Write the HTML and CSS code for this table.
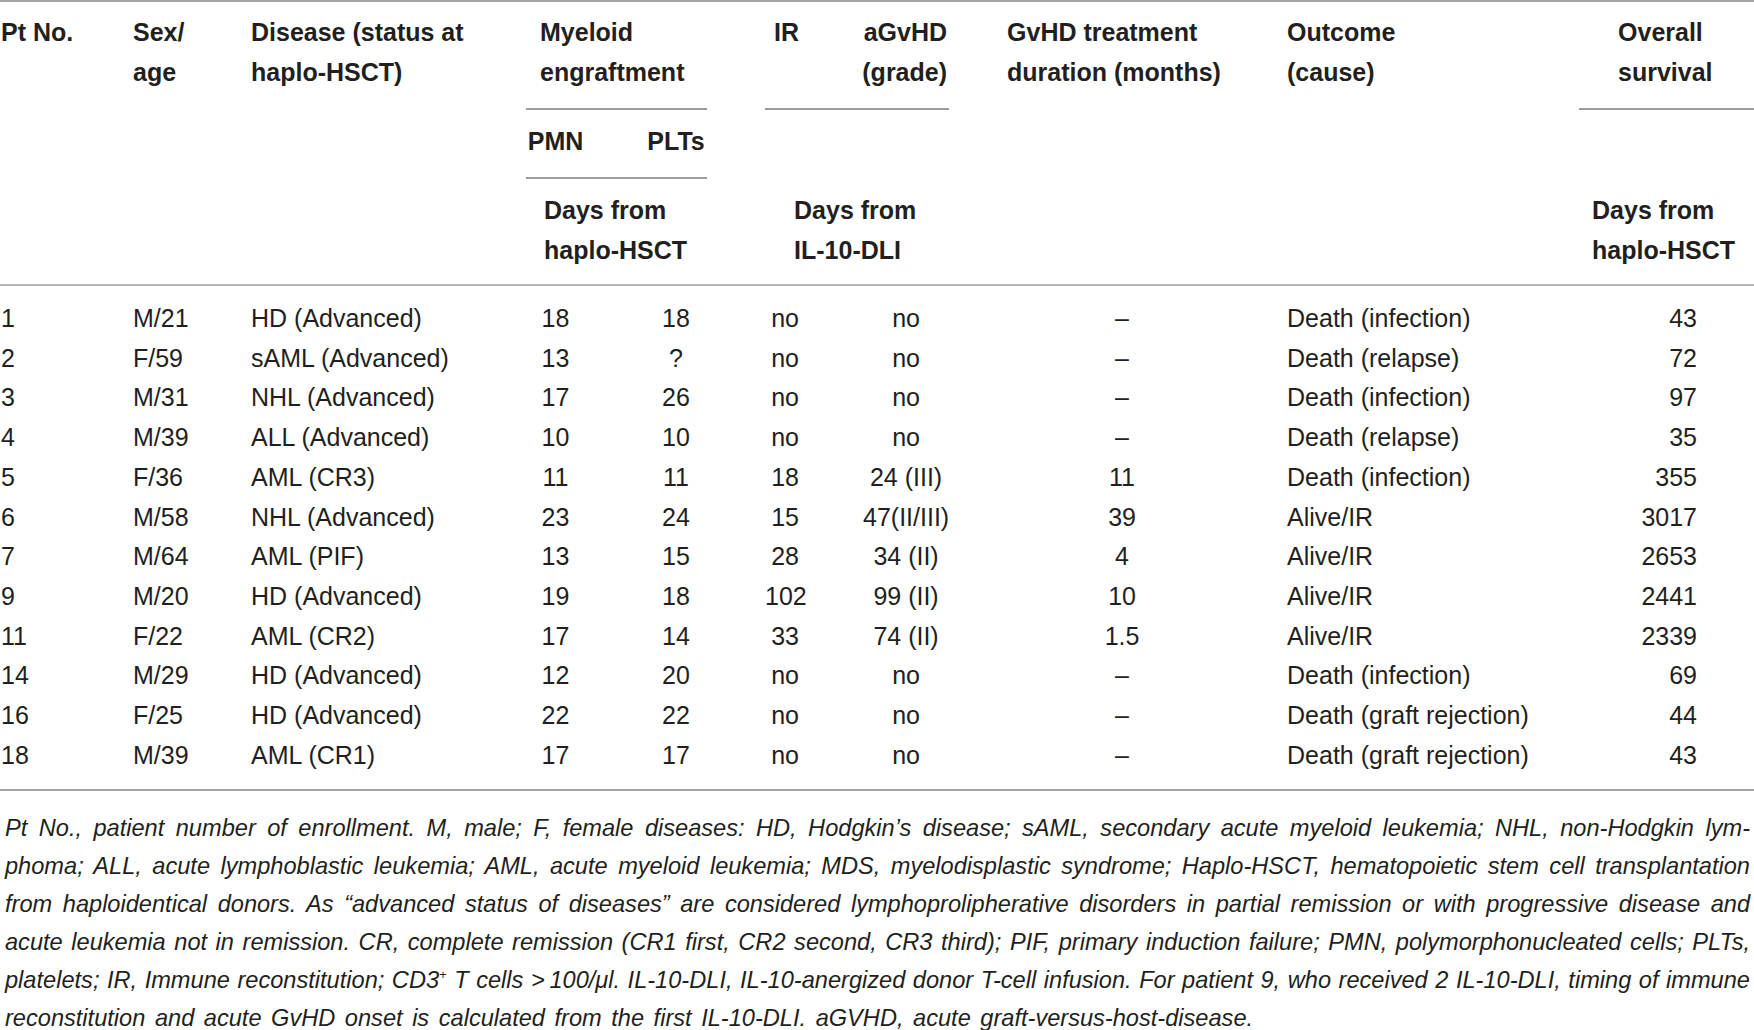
FILE: index.html
```html
<!DOCTYPE html>
<html lang="en">
<head>
<meta charset="utf-8">
<title>Table</title>
<link rel="stylesheet" href="styles.css">
</head>
<body>
<table class="data">
  <colgroup>
    <col class="w-pt"><col class="w-sex"><col class="w-dis"><col class="w-pmn"><col class="w-gap1"><col class="w-plt"><col class="w-gap2"><col class="w-ir"><col class="w-agv"><col class="w-trt"><col class="w-out"><col class="w-os">
  </colgroup>
  <thead>
    <tr>
      <th rowspan="3" class="h-span h-pt">Pt No.</th>
      <th rowspan="3" class="h-span h-sex">Sex/<br>age</th>
      <th rowspan="3" class="h-span h-dis">Disease (status at<br>haplo-HSCT)</th>
      <th colspan="3" class="h-group h-mye">Myeloid<br>engraftment</th>
      <th rowspan="3" class="h-span"></th>
      <th class="h-group h-ir">IR</th>
      <th class="h-group h-agv">aGvHD<br>(grade)</th>
      <th rowspan="3" class="h-span h-trt">GvHD treatment<br>duration (months)</th>
      <th rowspan="3" class="h-span h-out">Outcome<br>(cause)</th>
      <th class="h-group h-os">Overall<br>survival</th>
    </tr>
    <tr>
      <th class="h-sub h-pmn">PMN</th>
      <th class="h-sub"></th>
      <th class="h-sub h-plt">PLTs</th>
      <th class="h-blank"></th>
      <th class="h-blank"></th>
      <th class="h-blank"></th>
    </tr>
    <tr>
      <th colspan="3" class="h-days h-days-mye">Days from<br>haplo-HSCT</th>
      <th colspan="2" class="h-days h-days-ir">Days from<br>IL-10-DLI</th>
      <th class="h-days h-days-os">Days from<br>haplo-HSCT</th>
    </tr>
  </thead>
  <tbody>
    <tr><td>1</td><td>M/21</td><td>HD (Advanced)</td><td class="c">18</td><td></td><td class="c plt">18</td><td></td><td class="c">no</td><td class="agv">no</td><td class="trt">–</td><td>Death (infection)</td><td class="os">43</td></tr>
    <tr><td>2</td><td>F/59</td><td>sAML (Advanced)</td><td class="c">13</td><td></td><td class="c plt">?</td><td></td><td class="c">no</td><td class="agv">no</td><td class="trt">–</td><td>Death (relapse)</td><td class="os">72</td></tr>
    <tr><td>3</td><td>M/31</td><td>NHL (Advanced)</td><td class="c">17</td><td></td><td class="c plt">26</td><td></td><td class="c">no</td><td class="agv">no</td><td class="trt">–</td><td>Death (infection)</td><td class="os">97</td></tr>
    <tr><td>4</td><td>M/39</td><td>ALL (Advanced)</td><td class="c">10</td><td></td><td class="c plt">10</td><td></td><td class="c">no</td><td class="agv">no</td><td class="trt">–</td><td>Death (relapse)</td><td class="os">35</td></tr>
    <tr><td>5</td><td>F/36</td><td>AML (CR3)</td><td class="c">11</td><td></td><td class="c plt">11</td><td></td><td class="c">18</td><td class="agv">24 (III)</td><td class="trt">11</td><td>Death (infection)</td><td class="os">355</td></tr>
    <tr><td>6</td><td>M/58</td><td>NHL (Advanced)</td><td class="c">23</td><td></td><td class="c plt">24</td><td></td><td class="c">15</td><td class="agv">47(II/III)</td><td class="trt">39</td><td>Alive/IR</td><td class="os">3017</td></tr>
    <tr><td>7</td><td>M/64</td><td>AML (PIF)</td><td class="c">13</td><td></td><td class="c plt">15</td><td></td><td class="c">28</td><td class="agv">34 (II)</td><td class="trt">4</td><td>Alive/IR</td><td class="os">2653</td></tr>
    <tr><td>9</td><td>M/20</td><td>HD (Advanced)</td><td class="c">19</td><td></td><td class="c plt">18</td><td></td><td class="c">102</td><td class="agv">99 (II)</td><td class="trt">10</td><td>Alive/IR</td><td class="os">2441</td></tr>
    <tr><td>11</td><td>F/22</td><td>AML (CR2)</td><td class="c">17</td><td></td><td class="c plt">14</td><td></td><td class="c">33</td><td class="agv">74 (II)</td><td class="trt">1.5</td><td>Alive/IR</td><td class="os">2339</td></tr>
    <tr><td>14</td><td>M/29</td><td>HD (Advanced)</td><td class="c">12</td><td></td><td class="c plt">20</td><td></td><td class="c">no</td><td class="agv">no</td><td class="trt">–</td><td>Death (infection)</td><td class="os">69</td></tr>
    <tr><td>16</td><td>F/25</td><td>HD (Advanced)</td><td class="c">22</td><td></td><td class="c plt">22</td><td></td><td class="c">no</td><td class="agv">no</td><td class="trt">–</td><td>Death (graft rejection)</td><td class="os">44</td></tr>
    <tr><td>18</td><td>M/39</td><td>AML (CR1)</td><td class="c">17</td><td></td><td class="c plt">17</td><td></td><td class="c">no</td><td class="agv">no</td><td class="trt">–</td><td>Death (graft rejection)</td><td class="os">43</td></tr>
  </tbody>
</table>
<div class="notes">
  <span class="line">Pt No., patient number of enrollment. M, male; F, female diseases: HD, Hodgkin’s disease; sAML, secondary acute myeloid leukemia; NHL, non-Hodgkin lym-</span>
  <span class="line">phoma; ALL, acute lymphoblastic leukemia; AML, acute myeloid leukemia; MDS, myelodisplastic syndrome; Haplo-HSCT, hematopoietic stem cell transplantation</span>
  <span class="line">from haploidentical donors. As “advanced status of diseases” are considered lymphoprolipherative disorders in partial remission or with progressive disease and</span>
  <span class="line">acute leukemia not in remission. CR, complete remission (CR1 first, CR2 second, CR3 third); PIF, primary induction failure; PMN, polymorphonucleated cells; PLTs,</span>
  <span class="line">platelets; IR, Immune reconstitution; CD3<sup>+</sup> T cells &gt;&thinsp;100/μl. IL-10-DLI, IL-10-anergized donor T-cell infusion. For patient 9, who received 2 IL-10-DLI, timing of immune</span>
  <span class="line last">reconstitution and acute GvHD onset is calculated from the first IL-10-DLI. aGVHD, acute graft-versus-host-disease.</span>
</div>
</body>
</html>
```
FILE: styles.css
```css
html, body {
  margin: 0;
  padding: 0;
  background: #ffffff;
}

body {
  font-family: "Liberation Sans", Arial, sans-serif;
  color: #231f20;
  width: 1754px;
}

.data {
  width: 1754px;
  table-layout: fixed;
  border-collapse: separate;
  border-spacing: 0;
  border-top: 2px solid #a4a4a4;
}

.w-pt { width: 132px; }
.w-sex { width: 118px; }
.w-dis { width: 276px; }
.w-pmn { width: 59px; }
.w-gap1 { width: 60px; }
.w-plt { width: 62px; }
.w-gap2 { width: 58px; }
.w-ir { width: 40px; }
.w-agv { width: 144px; }
.w-trt { width: 337px; }
.w-out { width: 293px; }
.w-os { width: 175px; }

th {
  font-weight: bold;
  font-size: 25px;
  line-height: 40px;
  text-align: left;
  vertical-align: top;
  padding: 0;
  white-space: nowrap;
}

.h-span {
  padding-top: 10px;
  border-bottom: 2px solid #b4b4b4;
}

.h-pt, .h-sex, .h-dis, .h-out { padding-left: 1px; }
.h-trt { padding-left: 58px; }

.h-group {
  padding-top: 10px;
  padding-bottom: 16px;
  border-bottom: 2px solid #9c9c9c;
}

.h-mye { padding-left: 14px; }
.h-ir { padding-left: 9px; }
.h-agv { text-align: right; padding-right: 2px; }
.h-os { padding-left: 39px; }

.h-sub {
  padding-top: 11px;
  padding-bottom: 16px;
  border-bottom: 2px solid #9c9c9c;
}

.h-pmn, .h-plt { text-align: center; }

.h-blank {
  padding-top: 11px;
  padding-bottom: 16px;
  height: 40px;
}

.h-days {
  padding-top: 11px;
  padding-bottom: 14px;
  border-bottom: 2px solid #b4b4b4;
}

.h-days-mye { padding-left: 18px; }
.h-days-ir { padding-left: 29px; }
.h-days-os { padding-left: 13px; }

td {
  font-size: 25px;
  line-height: 39.7px;
  padding: 0;
  white-space: nowrap;
  vertical-align: middle;
}

td:first-child,
td:nth-child(2),
td:nth-child(3),
td:nth-child(11) {
  padding-left: 1px;
}

.c { text-align: center; }
.agv { text-align: center; padding-left: 58px; }
.trt { text-align: center; padding-left: 9px; }
.os { text-align: right; padding-right: 57px; }

tbody tr:first-child td { padding-top: 13px; }
tbody tr:last-child td {
  padding-bottom: 14px;
  border-bottom: 2px solid #a4a4a4;
}

.notes {
  margin-top: 18px;
  padding: 0 4px 0 5px;
  font-style: italic;
  font-size: 23.6px;
  line-height: 38px;
}

.line {
  display: block;
  white-space: nowrap;
  text-align: justify;
  text-align-last: justify;
}

.line.last {
  text-align-last: left;
  word-spacing: 3px;
}

.notes sup {
  font-size: 13px;
  line-height: 0;
  vertical-align: 9px;
}
```
